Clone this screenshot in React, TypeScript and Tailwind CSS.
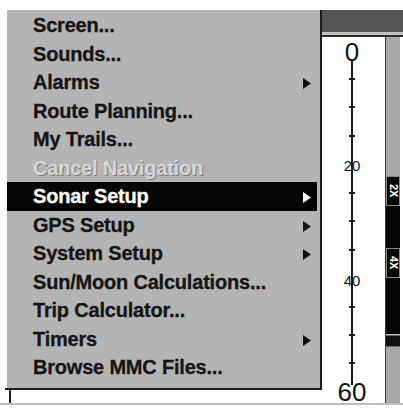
import React from "react";

type Item = { label: string; sub?: boolean; active?: boolean; disabled?: boolean };

const ITEMS: Item[] = [
  { label: "Screen..." },
  { label: "Sounds..." },
  { label: "Alarms", sub: true },
  { label: "Route Planning..." },
  { label: "My Trails..." },
  { label: "Cancel Navigation", disabled: true },
  { label: "Sonar Setup", sub: true, active: true },
  { label: "GPS Setup", sub: true },
  { label: "System Setup", sub: true },
  { label: "Sun/Moon Calculations..." },
  { label: "Trip Calculator..." },
  { label: "Timers", sub: true },
  { label: "Browse MMC Files..." },
];

// tick positions on the depth scale, relative to the scale box top
const TICKS = [42, 70, 99, 156, 184, 213, 270, 298, 326];

function Arrow({ white }: { white?: boolean }) {
  return (
    <svg width="8" height="11" viewBox="0 0 8 11" className="mt-[3px]">
      <polygon points="0,0 8,5.5 0,11" fill={white ? "#ffffff" : "#111111"} />
    </svg>
  );
}

function MenuRow({ item }: { item: Item }) {
  const tone = item.active
    ? "bg-[#050505] text-white [-webkit-text-stroke:0.3px_#ffffff]"
    : item.disabled
      ? "text-[#d6d6d6] [text-shadow:1px_1px_0_#7e7e7e]"
      : "text-[#151515] [-webkit-text-stroke:0.3px_#151515]";
  return (
    <div className={`h-[28.5px] flex items-center justify-between pl-[26px] pr-[6px] ${tone}`}>
      <span className="text-[20px] leading-[28.5px] font-bold tracking-[-0.2px]">{item.label}</span>
      {item.sub && <Arrow white={item.active} />}
    </div>
  );
}

function DepthScale() {
  return (
    <div className="relative w-[63px] bg-white">
      <div className="absolute left-[29px] top-[24px] w-[2px] h-[324px] bg-[#1a1a1a]" />
      {TICKS.map((t) => (
        <div key={t} className="absolute left-[27px] w-[6px] h-[2px] bg-[#1a1a1a]" style={{ top: t - 1 }} />
      ))}
      <div className="absolute left-0 w-[60px] top-[2px] text-center text-[26px] leading-[26px] text-[#111]">0</div>
      <div className="absolute left-0 w-[60px] top-[121px] text-center text-[15px] leading-[15px] text-[#111]">20</div>
      <div className="absolute left-0 w-[60px] top-[236px] text-center text-[15px] leading-[15px] text-[#111]">40</div>
      <div className="absolute left-0 w-[60px] top-[342px] text-center text-[26px] leading-[26px] text-[#111]">60</div>
    </div>
  );
}

function ZoomStrip() {
  return (
    <div className="w-[15px] shrink-0 border-l border-[#3a3a3a] bg-[#a9a9a9] flex flex-col">
      <div className="h-[139px]" />
      <div className="h-[158px] bg-[#050505] flex flex-col">
        <div className="h-[30px] border border-[#8a8a8a] flex items-center justify-center">
          <span className="[writing-mode:vertical-rl] text-[11px] font-bold text-white leading-none">2X</span>
        </div>
        <div className="h-[42px]" />
        <div className="h-[30px] border border-[#8a8a8a] flex items-center justify-center">
          <span className="[writing-mode:vertical-rl] text-[11px] font-bold text-white leading-none">4X</span>
        </div>
      </div>
      <div className="h-[1px] bg-[#c8c8c8]" />
      <div className="h-[12px] bg-[#111] border-y border-[#666]" />
    </div>
  );
}

export default function App() {
  return (
    <div className="w-[403px] h-[409px] bg-white overflow-hidden font-['Liberation_Sans',Arial,sans-serif]">
      <div className="h-[10px]" />
      <div className="flex h-[393px]">
        <div className="w-[322px] flex flex-col">
          <div className="ml-[7px] w-[315px] h-[378px] bg-[#b4b4b4] border-r-2 border-[#1e1e1e] pt-[1px] pr-[3px]">
            {ITEMS.map((it) => (
              <MenuRow key={it.label} item={it} />
            ))}
          </div>
          <div className="ml-[5px] w-[317px] h-[2px] bg-[#1e1e1e]" />
          <div className="ml-[9px] w-[2px] h-[13px] bg-[#1e1e1e]" />
        </div>
        <div className="flex-1 flex flex-col">
          <div className="h-[22px] bg-[#555555]" />
          <div className="h-[3px] bg-[#c2c2c2]" />
          <div className="h-[2px] bg-[#2e2e2e]" />
          <div className="flex-1 flex">
            <DepthScale />
            <ZoomStrip />
            <div className="flex-1" />
          </div>
        </div>
      </div>
      <div className="h-[2px] bg-[#bdbdbd]" />
    </div>
  );
}
